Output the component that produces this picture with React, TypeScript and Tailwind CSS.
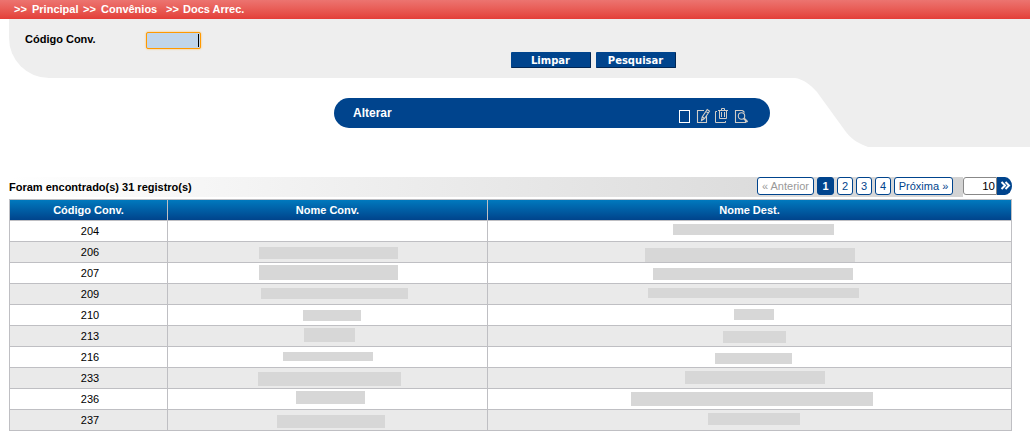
import React from "react";

type Bar = [x: number, y: number, w: number, h: number] | null;

const rows: { code: number; conv: Bar; dest: Bar }[] = [
  { code: 204, conv: null, dest: [185, 3, 161, 11] },
  { code: 206, conv: [91, 5, 139, 12], dest: [157, 6, 210, 14] },
  { code: 207, conv: [91, 2, 139, 15], dest: [165, 5, 200, 12] },
  { code: 209, conv: [93, 4, 147, 11], dest: [160, 4, 211, 10] },
  { code: 210, conv: [135, 5, 58, 11], dest: [246, 4, 40, 11] },
  { code: 213, conv: [136, 2, 51, 14], dest: [235, 5, 63, 12] },
  { code: 216, conv: [115, 5, 90, 9], dest: [227, 6, 77, 11] },
  { code: 233, conv: [90, 4, 143, 14], dest: [197, 3, 140, 13] },
  { code: 236, conv: [128, 2, 69, 13], dest: [143, 3, 242, 14] },
  { code: 237, conv: [109, 5, 108, 13], dest: [220, 3, 92, 12] },
];

function Mask({ bar }: { bar: Bar }) {
  if (!bar) return null;
  const [x, y, w, h] = bar;
  return <div className="bg-[#d7d7d7]" style={{ marginLeft: x, marginTop: y, width: w, height: h }} />;
}

function Toolbar() {
  return (
    <div className="flex gap-[3px] pt-[10px] text-[#d0cdc8]">
      <svg width="16" height="16" fill="none" stroke="white" shapeRendering="crispEdges">
        <path d="M2.5 2.5h10v12h-10z" />
      </svg>
      <svg width="15" height="16" fill="none" stroke="currentColor" strokeWidth="1.1">
        <path d="M8 2.5H1.5v12h9V8" />
        <path d="M5.5 12.5l.7-3.5 5-7.5 2.3 1.7-5 7.3zM10 3.5l2.3 1.6M6.5 9l2 1.5" />
      </svg>
      <svg width="16" height="16" fill="none" stroke="currentColor">
        <path d="M3 3.5H1.5v11h10V13M4 2.5h10M7.5 2V.5h3V2M5.5 3v7.5h7V3M7.5 4v5M10.5 4v5" />
      </svg>
      <svg width="17" height="16" fill="none" stroke="currentColor" strokeWidth="1.1">
        <path d="M9.5 2.5h-7v12H12.5V13M9.5 2.5l2 2" />
        <circle cx="8.5" cy="8" r="3.2" />
        <path d="M11 10.5l3.5 3.5" strokeWidth="2" />
      </svg>
    </div>
  );
}

const page =
  "flex h-[18px] items-center justify-center rounded-[3px] border border-[#00448d] bg-white text-[11px] text-[#00448d]";
const button =
  "h-4 w-20 rounded-[1px] border-r border-b border-[#002654] bg-[#00448d] text-center font-['DejaVu_Sans',sans-serif] text-[10px] leading-[17px] font-bold text-white";

export default function App() {
  return (
    <div className="h-[439px] w-[1030px] overflow-hidden bg-white font-['Liberation_Sans',Arial,sans-serif] text-[11px] text-black">
      <nav className="flex h-[19px] bg-linear-to-b from-[#ec7470] to-[#e33e38] pl-[14px] leading-[19px] font-bold whitespace-pre text-white">
        <span className="w-[18px]">&gt;&gt;</span>
        <span className="w-[51px]">Principal</span>
        <span className="w-[18px]">&gt;&gt;</span>
        <span className="w-[65px]">Convênios</span>
        <span className="w-[17px]">&gt;&gt;</span>
        <span>Docs Arrec.</span>
      </nav>

      <header className="flex h-32">
        <div className="w-[786px] pl-[9px]">
          <div className="h-[59px] rounded-bl-[40px] bg-[#eeeeee]">
            <div className="flex h-[33px] pl-4">
              <label className="w-[121px] pt-[14px] leading-[13px] font-bold">Código Conv.</label>
              <div className="mt-[13px] flex h-[17px] w-[55px] justify-end rounded-[2px] border border-[#ff9900] bg-[#c0d5eb] py-px pr-px shadow-[0_0_2px_#ffb84d]">
                <div className="h-[13px] w-px bg-black" />
              </div>
            </div>
            <div className="flex gap-[5px] pl-[502px]">
              <div className={button}>Limpar</div>
              <div className={button}>Pesquisar</div>
            </div>
          </div>
          <div className="mt-5 ml-[325px] flex h-[30px] w-[436px] justify-between rounded-[15px] bg-[#00448d] pr-[20px] pl-[19px]">
            <span className="text-[12px] leading-[30px] font-bold text-white">Alterar</span>
            <Toolbar />
          </div>
        </div>
        <svg width="82" height="128">
          <path d="M0 0H82V128C74 125 66 121 60 113L31 73C25 66 17 60 9 59H0Z" fill="#eeeeee" />
        </svg>
        <div className="flex-1 bg-[#eeeeee]" />
      </header>

      <section className="mt-[30px] ml-[9px] w-[1003px]">
        <div className="flex h-[22px]">
          <div className="flex h-5 w-[954px] justify-between bg-linear-to-r from-white to-[#d3d3d3]">
            <span className="font-bold leading-[20px]">Foram encontrado(s) 31 registro(s)</span>
            <div className="flex gap-[3px] pr-[10px]">
              <div className={`${page} w-[57px] text-[#999999]!`}>« Anterior</div>
              <div className={`${page} w-[17px] bg-[#00448d]! font-bold text-white!`}>1</div>
              <div className={`${page} w-4`}>2</div>
              <div className={`${page} w-4`}>3</div>
              <div className={`${page} w-4`}>4</div>
              <div className={`${page} w-[59px]`}>Próxima »</div>
            </div>
          </div>
          <div className="h-[18px] w-[34px] rounded-l-[3px] border border-[#888888] pr-px text-right text-[11.5px] leading-[17px]">10</div>
          <svg width="15" height="18">
            <path d="M0 0H8a7 9 0 0 1 0 18H0Z" fill="#00448d" />
            <path d="M4.5 5L8 8.5 4.5 12M8.5 5L12 8.5 8.5 12" fill="none" stroke="white" strokeWidth="2" />
          </svg>
        </div>
        <table className="w-[1003px] table-fixed border-separate border-spacing-0 border-t border-l border-[#bfbfc3] text-center">
          <colgroup>
            <col className="w-[158px]" />
            <col className="w-[320px]" />
            <col className="w-[524px]" />
          </colgroup>
          <thead>
            <tr className="h-[21px] bg-linear-to-b from-[#0079be] to-[#004189] text-white">
              {["Código Conv.", "Nome Conv.", "Nome Dest."].map((title) => (
                <th key={title} className="h-[21px] border-r border-b border-[#bfbfc3] p-0 leading-[20px]">
                  {title}
                </th>
              ))}
            </tr>
          </thead>
          <tbody>
            {rows.map(({ code, conv, dest }) => (
              <tr key={code} className="h-[21px] even:bg-[#eaeaea]">
                <td className="border-r border-b border-[#bfbfc3] py-0 pr-0 pl-[3px] leading-[20px]">{code}</td>
                <td className="border-r border-b border-[#bfbfc3] p-0 align-top">
                  <div className="flex h-5">
                    <Mask bar={conv} />
                  </div>
                </td>
                <td className="border-r border-b border-[#bfbfc3] p-0 align-top">
                  <div className="flex h-5">
                    <Mask bar={dest} />
                  </div>
                </td>
              </tr>
            ))}
          </tbody>
        </table>
      </section>
    </div>
  );
}
